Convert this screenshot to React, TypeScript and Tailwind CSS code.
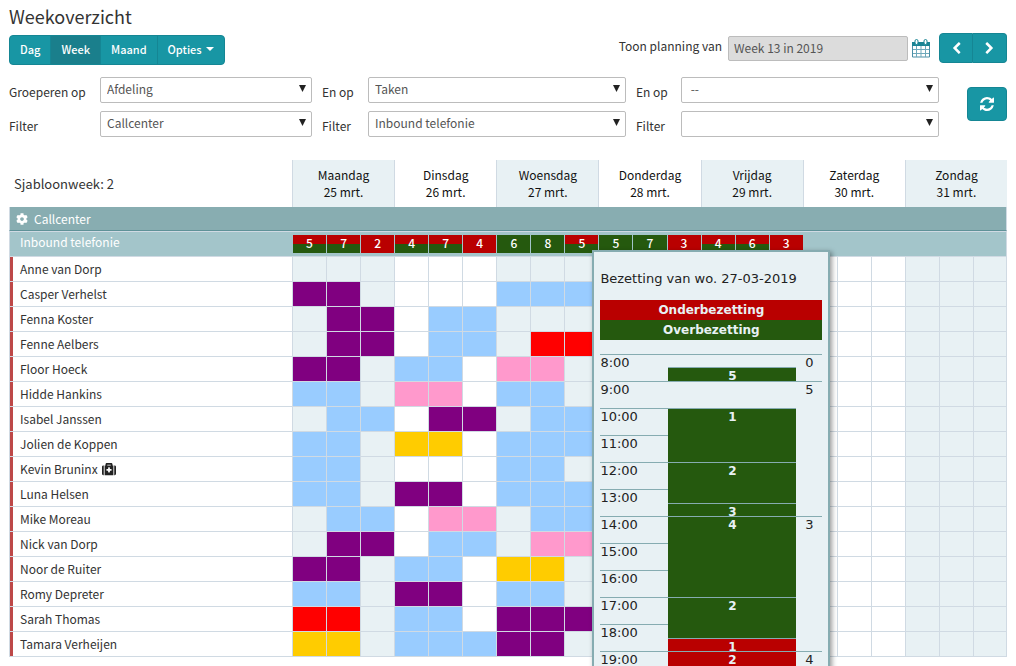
import { ReactNode, useState } from 'react';
import { FaCog, FaMedkit } from 'react-icons/fa';
import clsx from 'clsx';

interface Day {
  name: string;
  date: string;
}

interface Employee {
  name: string;
  // one character per day part, three parts a day, see SHIFT_COLORS
  shifts: string;
  firstAid?: boolean;
}

type Level = 'under' | 'over' | 'mixed';

interface Occupation {
  count: number;
  level: Level;
}

interface Segment {
  height: string;
  label?: string;
  level?: Level;
}

const DAYS: Day[] = [
  { name: 'Maandag', date: '25 mrt.' },
  { name: 'Dinsdag', date: '26 mrt.' },
  { name: 'Woensdag', date: '27 mrt.' },
  { name: 'Donderdag', date: '28 mrt.' },
  { name: 'Vrijdag', date: '29 mrt.' },
  { name: 'Zaterdag', date: '30 mrt.' },
  { name: 'Zondag', date: '31 mrt.' },
];

const PARTS = Array.from({ length: DAYS.length * 3 }, (_, i) => i);

// index of the day part that the popup belongs to
const POPUP_PART = 8;

const SHIFT_COLORS: Record<string, string> = {
  p: 'bg-[#800080]',
  b: 'bg-[#99ccff]',
  k: 'bg-[#ff99cc]',
  y: 'bg-[#ffcc00]',
  r: 'bg-[#ff0000]',
};

const LEVEL_COLORS: Record<Level, string> = {
  under: 'bg-[#b90000]',
  over: 'bg-[#25590e]',
  mixed: 'bg-linear-to-b from-[#b90000] from-50% to-[#25590e] to-50%',
};

const EMPLOYEES: Employee[] = [
  { name: 'Anne van Dorp', shifts: '.........' },
  { name: 'Casper Verhelst', shifts: 'pp....bbb' },
  { name: 'Fenna Koster', shifts: '.pp.bb...' },
  { name: 'Fenne Aelbers', shifts: '.pp.bb.rr' },
  { name: 'Floor Hoeck', shifts: 'pp.bb.kk.' },
  { name: 'Hidde Hankins', shifts: 'bb.kk.bb.' },
  { name: 'Isabel Janssen', shifts: '.bb.pp.bb' },
  { name: 'Jolien de Koppen', shifts: 'bb.yy.bbb' },
  { name: 'Kevin Bruninx', shifts: 'bb....bb.', firstAid: true },
  { name: 'Luna Helsen', shifts: 'bb.pp.bbb' },
  { name: 'Mike Moreau', shifts: '.bb.kk.bb' },
  { name: 'Nick van Dorp', shifts: '.pp.bb.kk' },
  { name: 'Noor de Ruiter', shifts: 'pp.bb.yy.' },
  { name: 'Romy Depreter', shifts: 'bb.pp.bb.' },
  { name: 'Sarah Thomas', shifts: 'rr.bb.ppp' },
  { name: 'Tamara Verheijen', shifts: 'yy.bbbpp.' },
];

const OCCUPATION: Occupation[] = [
  { count: 5, level: 'mixed' },
  { count: 7, level: 'mixed' },
  { count: 2, level: 'under' },
  { count: 4, level: 'mixed' },
  { count: 7, level: 'mixed' },
  { count: 4, level: 'under' },
  { count: 6, level: 'over' },
  { count: 8, level: 'over' },
  { count: 5, level: 'mixed' },
  { count: 5, level: 'over' },
  { count: 7, level: 'over' },
  { count: 3, level: 'under' },
  { count: 4, level: 'mixed' },
  { count: 6, level: 'mixed' },
  { count: 3, level: 'under' },
];

const HOURS = [8, 9, 10, 11, 12, 13, 14, 15, 16, 17, 18, 19];

const SEGMENTS: Segment[] = [
  { height: 'h-[13px]' },
  { height: 'h-[14px]', label: '5', level: 'over' },
  { height: 'h-[27px]' },
  { height: 'h-[54px]', label: '1', level: 'over' },
  { height: 'h-[41px]', label: '2', level: 'over' },
  { height: 'h-[13px]', label: '3', level: 'over' },
  { height: 'h-[81px]', label: '4', level: 'over' },
  { height: 'h-[41px]', label: '2', level: 'over' },
  { height: 'h-[13px]', label: '1', level: 'under' },
  { height: 'h-[27px]', label: '2', level: 'under' },
];

const REQUIRED: Segment[] = [
  { height: 'h-[27px]', label: '0' },
  { height: 'h-[135px]', label: '5' },
  { height: 'h-[135px]', label: '3' },
  { height: 'h-[27px]', label: '4' },
];

const isShaded = (part: number) => Math.floor(part / 3) % 2 === 0;

const RefreshIcon = () => (
  <svg viewBox="0 0 1536 1536" className="size-3.5" fill="currentColor" aria-hidden="true">
    <path d="M1511 928q0 5-1 7-64 268-268 434.5t-478 166.5q-146 0-282.5-55t-243.5-157l-129 129q-19 19-45 19t-45-19-19-45v-448q0-26 19-45t45-19h448q26 0 45 19t19 45-19 45l-137 137q71 66 161 102t187 36q134 0 250-65t186-179q11-17 53-117 8-23 30-23h192q13 0 22.5 9.5t9.5 22.5zm25-800v448q0 26-19 45t-45 19h-448q-26 0-45-19t-19-45 19-45l138-138q-148-137-349-137-134 0-250 65t-186 179q-11 17-53 117-8 23-30 23h-199q-13 0-22.5-9.5t-9.5-22.5v-7q65-268 270-434.5t480-166.5q146 0 284 55.5t245 156.5l130-129q19-19 45-19t45 19 19 45z" />
  </svg>
);

const ChevronLeft = () => (
  <svg viewBox="0 0 1792 1792" className="size-[13px]" fill="currentColor" aria-hidden="true">
    <path d="M1427 301l-531 531 531 531q19 19 19 45t-19 45l-166 166q-19 19-45 19t-45-19l-742-742q-19-19-19-45t19-45l742-742q19-19 45-19t45 19l166 166q19 19 19 45t-19 45z" />
  </svg>
);

const ChevronRight = () => (
  <svg viewBox="0 0 1792 1792" className="size-[13px]" fill="currentColor" aria-hidden="true">
    <path d="M1363 877l-742 742q-19 19-45 19t-45-19l-166-166q-19-19-19-45t19-45l531-531-531-531q-19-19-19-45t19-45l166-166q19-19 45-19t45 19l742 742q19 19 19 45t-19 45z" />
  </svg>
);

const CalendarIcon = () => (
  <svg viewBox="0 0 18 19" className="h-[19px] w-[18px]" aria-hidden="true">
    <path d="M0.5 3.5h17v14.5h-17z" fill="#fff" stroke="#4a8fa6" />
    <path d="M0 3h18v4H0z" fill="#1b8494" />
    <path d="M4.5 7v11M9 7v11M13.5 7v11M1 10.5h16M1 14.5h16" stroke="#6fa9bb" fill="none" />
    <rect x="3" y="0.5" width="3" height="5" rx="1.5" fill="#fff" stroke="#1b8494" />
    <rect x="12" y="0.5" width="3" height="5" rx="1.5" fill="#fff" stroke="#1b8494" />
  </svg>
);

interface SelectFieldProps {
  id: string;
  label: string;
  value: string;
  indent?: boolean;
}

const SelectField = ({ id, label, value, indent = true }: SelectFieldProps) => (
  <>
    <label htmlFor={id} className={clsx('pt-1', indent && 'pl-2.5')}>
      {label}
    </label>
    <div className="relative">
      <select
        id={id}
        defaultValue={value}
        className="block h-[26px] w-full appearance-none rounded-xs border border-[#bcbcbc] bg-white pr-5 pb-0.5 pl-1.5 text-[#555]"
      >
        <option value={value}>{value}</option>
      </select>
      <svg
        viewBox="0 0 7 7"
        className="pointer-events-none absolute top-2 right-1.5 size-[7px]"
        fill="#222"
        aria-hidden="true"
      >
        <path d="M0 0h7L3.5 7z" />
      </svg>
    </div>
  </>
);

interface NavButtonProps {
  label: string;
  className?: string;
  children: ReactNode;
}

const NavButton = ({ label, className, children }: NavButtonProps) => (
  <button
    type="button"
    aria-label={label}
    className={clsx(
      'flex items-center justify-center border border-[#158694] bg-[#1896a4] text-white hover:bg-[#1a7f8c]',
      className
    )}
  >
    {children}
  </button>
);

const OccupationPopup = () => (
  <div className="absolute top-[18px] left-7 z-10 w-[238px] border-2 border-[#86acb1] bg-[#e8f1f4] px-1.5 pb-4 text-left font-['DejaVu_Sans',Verdana,sans-serif] text-[13px] font-normal text-[#222] shadow-[2px_2px_5px_rgba(0,0,0,0.4)]">
    <p className="pt-[21px] pb-[15px] leading-3 whitespace-nowrap">Bezetting van wo. 27-03-2019</p>
    <div className="text-center text-xs leading-5 font-bold text-[#e8f1f4]">
      <p className="bg-[#b90000]">Onderbezetting</p>
      <p className="bg-[#25590e]">Overbezetting</p>
    </div>
    <div className="mt-3.5 grid grid-cols-[68px_1fr_26px] leading-4">
      <div>
        {HOURS.map((hour) => (
          <div key={hour} className="h-[27px] border-t border-[#86acb1]">
            {hour}:00
          </div>
        ))}
      </div>
      <div className="text-center text-xs leading-4 font-bold text-[#e8f1f4]">
        {SEGMENTS.map((segment, i) => (
          <div
            key={i}
            className={clsx('border-t border-[#86acb1]', segment.height, segment.level && LEVEL_COLORS[segment.level])}
          >
            {segment.label}
          </div>
        ))}
      </div>
      <div className="text-center">
        {REQUIRED.map((segment, i) => (
          <div key={i} className={clsx('border-t border-[#86acb1]', segment.height)}>
            {segment.label}
          </div>
        ))}
      </div>
    </div>
  </div>
);

const PlanningTable = () => (
  <table className="mt-[23px] w-full table-fixed border-separate border-spacing-0">
    <colgroup>
      <col className="w-[283px]" />
      {PARTS.map((part) => (
        <col key={part} />
      ))}
    </colgroup>
    <thead>
      <tr className="h-[47px]">
        <th className="pl-[5px] text-left text-[13px] font-normal">Sjabloonweek: 2</th>
        {DAYS.map((day, i) => (
          <th
            key={day.name}
            colSpan={3}
            className={clsx(
              'border-l border-[#d0dae3] pb-0.5 leading-[17px] font-normal text-[#111]',
              i % 2 === 0 && 'bg-[#e8f1f4]'
            )}
          >
            {day.name}
            <br />
            {day.date}
          </th>
        ))}
      </tr>
    </thead>
    <tbody>
      <tr className="h-6">
        <th
          colSpan={22}
          className="border-r border-b border-l border-r-[#d0dae3] border-b-[#5f9298] border-l-[#d0dae3] bg-[#88adb1] px-1.5 py-0 text-left font-normal text-white"
        >
          <span className="flex items-center gap-1.5">
            <FaCog className="size-3" />
            Callcenter
          </span>
        </th>
      </tr>
      <tr className="h-[26px]">
        <th className="border-y border-l border-[#d0dae3] bg-[#a3c5ca] pb-1 pl-2.5 text-left font-normal text-white">
          Inbound telefonie
        </th>
        {PARTS.map((part) => {
          const occupation = OCCUPATION[part];
          return (
            <td
              key={part}
              className={clsx(
                'relative border-y border-[#d0dae3] bg-[#a3c5ca] p-0 text-center font-medium text-white last:border-r',
                occupation && 'pl-px'
              )}
            >
              {occupation && (
                <div className={clsx('h-[18px] leading-4', LEVEL_COLORS[occupation.level])}>
                  {occupation.count}
                </div>
              )}
              {part === POPUP_PART && <OccupationPopup />}
            </td>
          );
        })}
      </tr>
      {EMPLOYEES.map((employee) => (
        <tr key={employee.name} className="h-[25px]">
          <th className="border-b border-l border-[#d0dae3] p-0 text-left font-normal">
            <span className="flex h-6 items-center gap-1 border-l-3 border-[#bd4848] pl-[7px]">
              {employee.name}
              {employee.firstAid && <FaMedkit className="size-3.5 text-[#222]" />}
            </span>
          </th>
          {PARTS.map((part) => (
            <td
              key={part}
              className={clsx(
                'border-b border-l border-[#d0dae3] p-0 last:border-r',
                SHIFT_COLORS[employee.shifts[part]] ?? (isShaded(part) ? 'bg-[#e8f1f4]' : 'bg-white')
              )}
            />
          ))}
        </tr>
      ))}
    </tbody>
  </table>
);

const VIEWS = ['Dag', 'Week', 'Maand'];

const App = () => {
  const [view, setView] = useState('Week');

  return (
    <main className="relative min-h-screen overflow-hidden bg-white px-[9px] font-['Noto_Sans_CJK_SC','Open_Sans',sans-serif] text-xs leading-4 text-[#333]">
      <h1 className="pt-[5px] text-lg leading-[23px] text-[#333]">Weekoverzicht</h1>

      <div className="mt-[5px] flex items-start justify-between">
        <div className="mt-0.5 flex h-[30px] overflow-hidden rounded-sm border border-[#158694] bg-[#1896a4] text-[11px] font-medium text-white">
          {VIEWS.map((name) => (
            <button
              key={name}
              type="button"
              onClick={() => setView(name)}
              className={clsx('border-r border-[#158694] px-2.5 pb-0.5', view === name && 'bg-[#1a7f8c]')}
            >
              {name}
            </button>
          ))}
          <button type="button" className="flex items-center gap-1 px-2.5 pb-0.5">
            Opties
            <svg viewBox="0 0 8 4" className="h-1 w-2" fill="currentColor" aria-hidden="true">
              <path d="M0 0h8L4 4z" />
            </svg>
          </button>
        </div>

        <div className="flex items-center">
          <label htmlFor="period" className="mr-1.5 pb-1">
            Toon planning van
          </label>
          <input
            id="period"
            type="text"
            readOnly
            value="Week 13 in 2019"
            className="h-[25px] w-[180px] rounded-xs border border-[#bcbcbc] bg-[#dcdcdc] px-[5px] pb-0.5 text-[#555]"
          />
          <button type="button" aria-label="Kalender" className="mr-[9px] ml-1">
            <CalendarIcon />
          </button>
          <NavButton label="Vorige week" className="h-[30px] w-[34px] rounded-l-sm">
            <ChevronLeft />
          </NavButton>
          <NavButton label="Volgende week" className="h-[30px] w-[34px] rounded-r-sm border-l-0">
            <ChevronRight />
          </NavButton>
        </div>
      </div>

      <div className="mt-3 flex items-start gap-7">
        <div className="grid flex-1 grid-cols-[91px_212fr_56px_258fr_55px_258fr] items-center gap-y-2">
          <SelectField id="group-1" label="Groeperen op" value="Afdeling" indent={false} />
          <SelectField id="group-2" label="En op" value="Taken" />
          <SelectField id="group-3" label="En op" value={'\u00a0--'} />
          <SelectField id="filter-1" label="Filter" value="Callcenter" indent={false} />
          <SelectField id="filter-2" label="Filter" value="Inbound telefonie" />
          <SelectField id="filter-3" label="Filter" value="" />
        </div>
        <NavButton label="Vernieuwen" className="mt-2.5 h-[34px] w-10 rounded-sm">
          <RefreshIcon />
        </NavButton>
      </div>

      <PlanningTable />
    </main>
  );
};

export default App;
